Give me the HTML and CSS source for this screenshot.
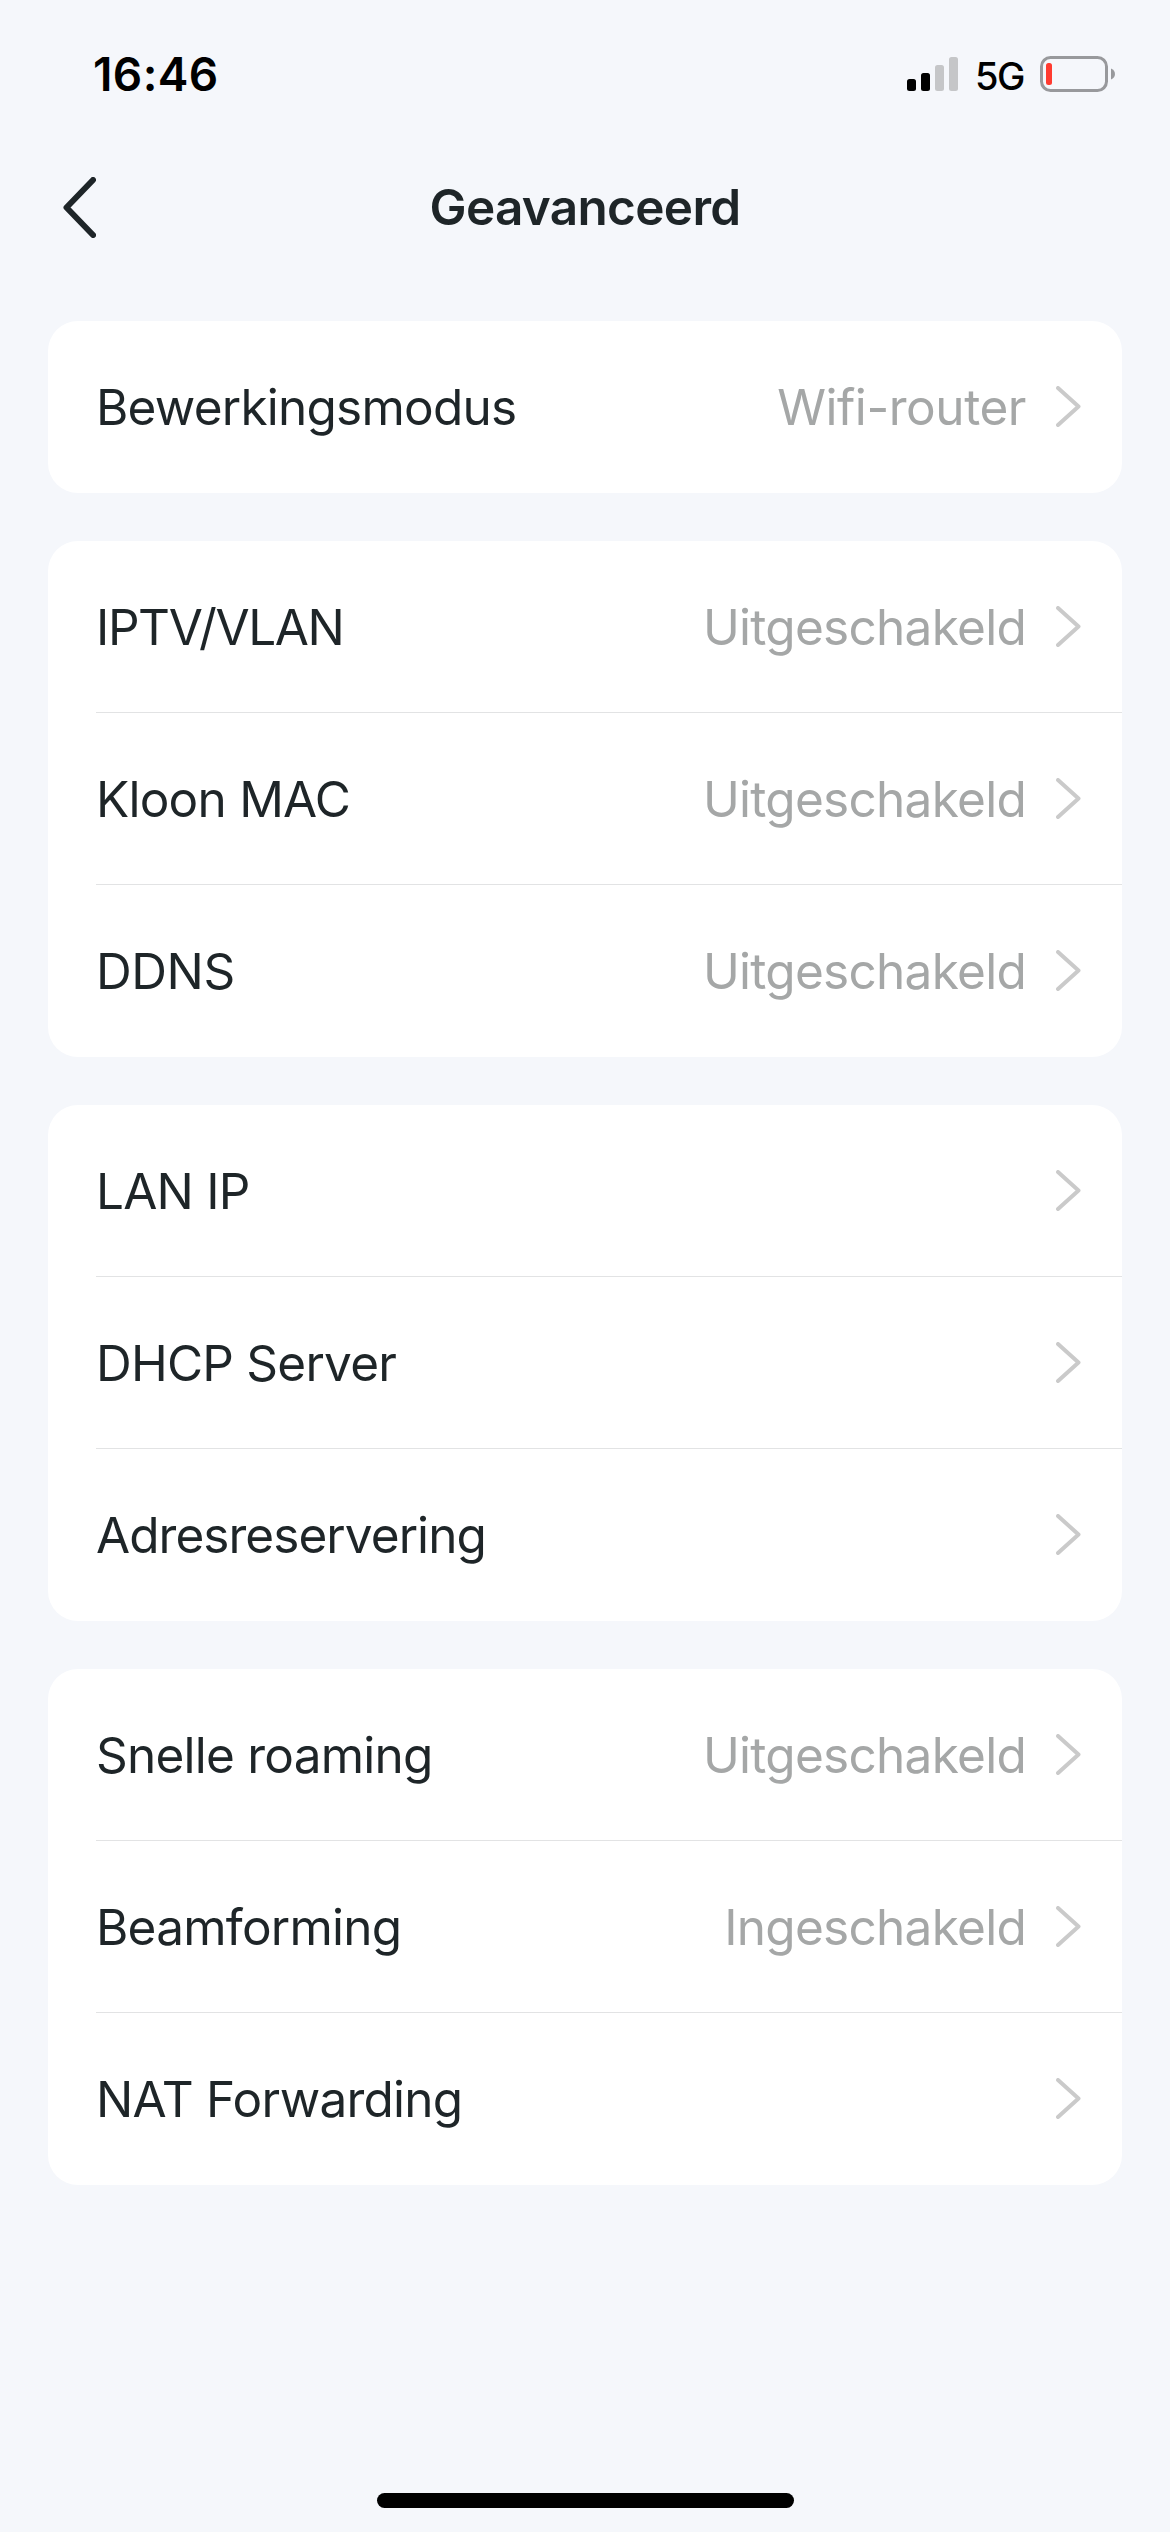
FILE: index.html
```html
<!DOCTYPE html>
<html lang="nl">
<head>
<meta charset="utf-8">
<title>Geavanceerd</title>
<link rel="stylesheet" href="styles.css">
</head>
<body>
<svg class="defs" width="0" height="0"><defs><symbol id="chev" viewBox="0 0 25 41"><path d="M2 2l20.5 18.5L2 39" fill="none" stroke="#cacaca" stroke-width="4" stroke-linecap="round" stroke-linejoin="round"/></symbol></defs></svg>
<div class="status"><span class="time">16:46</span>
<div class="indicators">
<svg width="52" height="36" viewBox="0 0 52 36"><rect y="23" width="9" height="12" rx="2.5"/><rect x="14" y="17" width="9" height="18" rx="2.5"/><rect x="28" y="9" width="9" height="26" rx="2.5" fill="#c5c6c8"/><rect x="42" y="1" width="9" height="34" rx="2.5" fill="#c5c6c8"/></svg>
<span class="network">5G</span>
<svg width="76" height="36" viewBox="0 0 76 36"><rect x="1.5" y="1.5" width="65" height="33" rx="9" fill="none" stroke="#98999c" stroke-width="3"/><rect x="6" y="7" width="6" height="22" rx="2.5" fill="#ff3b30"/><path d="M71 12.5c5.300 2 5.300 9 0 11z" fill="#98999c"/></svg>
</div></div>
<header class="nav"><svg class="back" width="33" height="61" viewBox="0 0 33 61"><path d="M30 3L3.500 30.500 30 58" fill="none" stroke="#1e2528" stroke-width="6" stroke-linecap="round" stroke-linejoin="round"/></svg><h1>Geavanceerd</h1></header>
<main>
<section class="card">
<div class="row"><span class="label">Bewerkingsmodus</span><span class="value loose">Wifi-router</span><svg class="chevron"><use href="#chev"/></svg></div>
</section>
<section class="card">
<div class="row"><span class="label tightest">IPTV/VLAN</span><span class="value">Uitgeschakeld</span><svg class="chevron"><use href="#chev"/></svg></div>
<div class="row"><span class="label">Kloon MAC</span><span class="value">Uitgeschakeld</span><svg class="chevron"><use href="#chev"/></svg></div>
<div class="row"><span class="label loose">DDNS</span><span class="value">Uitgeschakeld</span><svg class="chevron"><use href="#chev"/></svg></div>
</section>
<section class="card">
<div class="row"><span class="label">LAN IP</span><svg class="chevron"><use href="#chev"/></svg></div>
<div class="row"><span class="label">DHCP Server</span><svg class="chevron"><use href="#chev"/></svg></div>
<div class="row"><span class="label tight">Adresreservering</span><svg class="chevron"><use href="#chev"/></svg></div>
</section>
<section class="card">
<div class="row"><span class="label">Snelle roaming</span><span class="value">Uitgeschakeld</span><svg class="chevron"><use href="#chev"/></svg></div>
<div class="row"><span class="label">Beamforming</span><span class="value">Ingeschakeld</span><svg class="chevron"><use href="#chev"/></svg></div>
<div class="row"><span class="label">NAT Forwarding</span><svg class="chevron"><use href="#chev"/></svg></div>
</section>
</main>
<footer><div class="home"></div></footer>
</body>
</html>
```

FILE: styles.css
```css
* { box-sizing: border-box; }
body { margin: 0; width: 1170px; height: 2532px; background: #f5f7fb; color: #1e2528; font-family: Inter, sans-serif; display: flex; flex-direction: column; overflow: hidden; }
.defs { display: block; position: absolute; }
.status { height: 141px; padding: 7px 54px 0 93px; display: flex; justify-content: space-between; align-items: center; color: #000; }
.time { font-size: 46px; font-weight: 600; letter-spacing: 0.4px; }
.indicators { display: flex; align-items: center; }
.network { width: 81px; padding-top: 3px; text-align: center; font-size: 38px; font-weight: 500; letter-spacing: -1.5px; }
.nav { height: 132px; display: grid; grid-template-columns: 1fr auto 1fr; align-items: center; }
.back { margin-left: 63px; }
h1 { margin: 0; font-size: 49.5px; font-weight: 600; letter-spacing: -0.7px; }
main { padding: 48px 48px 0; display: flex; flex-direction: column; gap: 48px; }
.card { background: #fff; border-radius: 30px; padding-left: 48px; }
.row { height: 172px; display: flex; align-items: center; font-size: 49.5px; padding-right: 41px; border-bottom: 1px solid #e2e3e4; }
.row:last-child { border-bottom-color: transparent; }
.label { flex: 1; letter-spacing: -0.77px; }
.value { color: #a5a7a7; margin-right: 30px; letter-spacing: -0.72px; }
.loose { letter-spacing: -0.45px; }
.tight { letter-spacing: -0.95px; }
.tightest { letter-spacing: -1.4px; }
.chevron { width: 25px; height: 41px; }
footer { margin-top: auto; height: 39px; padding-left: 1px; display: flex; justify-content: center; }
.home { width: 417px; height: 15px; border-radius: 8px; background: #000; }
```
